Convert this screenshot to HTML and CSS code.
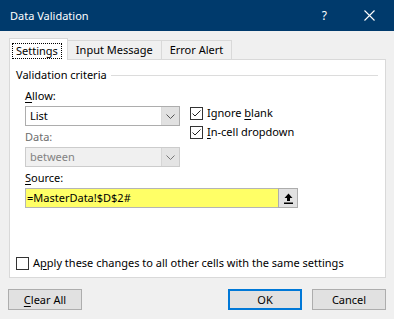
FILE: index.html
```html
<!DOCTYPE html>
<html>
<head>
<meta charset="utf-8">
<link rel="stylesheet" href="styles.css">
</head>
<body>
<div class="dialog">
  <div class="titlebar">
    <span class="title">Data Validation</span>
    <span class="help">?</span>
    <svg class="close" width="11" height="11" viewBox="0 0 11 11"><path d="M0.5 0.5 L10.5 10.5 M10.5 0.5 L0.5 10.5" stroke="#fff" stroke-width="1.1" fill="none"/></svg>
  </div>
  <div class="tabs">
    <div class="tab active"><span class="focus">Settings</span></div>
    <div class="tab">Input Message</div>
    <div class="tab">Error Alert</div>
  </div>
  <div class="panel">
    <div class="group-head"><span>Validation criteria</span><div class="group-line"></div></div>
    <div class="criteria">
      <div class="left-col">
        <div class="label"><u>A</u>llow:</div>
        <div class="select">
          <span class="select-text">List</span>
          <span class="drop"><svg width="9" height="5" viewBox="0 0 9 5"><path d="M0.5 0.5 L4.5 4.5 L8.5 0.5" stroke="#555" fill="none"/></svg></span>
        </div>
        <div class="label disabled-label">Data:</div>
        <div class="select disabled">
          <span class="select-text">between</span>
          <span class="drop"><svg width="9" height="5" viewBox="0 0 9 5"><path d="M0.5 0.5 L4.5 4.5 L8.5 0.5" stroke="#777" fill="none"/></svg></span>
        </div>
      </div>
      <div class="right-col">
        <div class="check-row">
          <span class="box"><svg width="11" height="11" viewBox="0 0 11 11"><path d="M1.5 5.5 L4 8 L9.5 2.5" stroke="#222" stroke-width="1" fill="none"/></svg></span>
          <span>Ignore <u>b</u>lank</span>
        </div>
        <div class="check-row">
          <span class="box"><svg width="11" height="11" viewBox="0 0 11 11"><path d="M1.5 5.5 L4 8 L9.5 2.5" stroke="#222" stroke-width="1" fill="none"/></svg></span>
          <span><u>I</u>n-cell dropdown</span>
        </div>
      </div>
    </div>
    <div class="source-block">
      <div class="label"><u>S</u>ource:</div>
      <div class="source-row">
        <div class="source-input">=MasterData!$D$2#</div>
        <div class="range-btn"><svg width="9" height="11" viewBox="0 0 9 11"><path d="M4.5 0.5 L8.5 5 L6 5 L6 8 L3 8 L3 5 L0.5 5 Z" fill="#000"/><rect x="0" y="9.5" width="9" height="1.5" fill="#000"/></svg></div>
      </div>
    </div>
    <div class="apply-row">
      <span class="box"></span>
      <span>A<u>p</u>ply these changes to all other cells with the same settings</span>
    </div>
  </div>
  <div class="buttons">
    <div class="btn"><u>C</u>lear All</div>
    <div class="spacer"></div>
    <div class="btn default">OK</div>
    <div class="btn">Cancel</div>
  </div>
</div>
</body>
</html>
```
FILE: styles.css
```css
html, body {
  margin: 0;
  padding: 0;
}
body {
  width: 394px;
  height: 319px;
  overflow: hidden;
  background: #f0f0f0;
  font-family: "Noto Sans", "Open Sans", sans-serif;
  font-size: 11px;
  color: #000;
}
u {
  text-decoration: underline;
  text-underline-offset: 2px;
}
.dialog {
  display: flex;
  flex-direction: column;
  height: 319px;
}
.titlebar {
  height: 31px;
  background: #003a6c;
  color: #fff;
  display: flex;
  align-items: center;
  padding-left: 10px;
  flex-shrink: 0;
}
.title {
  flex: 1;
  font-size: 11px;
}
.help {
  font-size: 12px;
  margin-right: 37px;
}
.close {
  margin-right: 19px;
}
.tabs {
  display: flex;
  align-items: flex-end;
  padding-left: 9px;
  height: 28px;
  flex-shrink: 0;
}
.tab {
  height: 19px;
  line-height: 18px;
  padding: 0 8px;
  border: 1px solid #d9d9d9;
  border-bottom: none;
  background: #f0f0f0;
  margin-left: -1px;
  box-sizing: border-box;
}
.tab:first-child {
  margin-left: 0;
}
.tab.active {
  height: 22px;
  background: #fff;
  margin-bottom: -1px;
  position: relative;
  z-index: 1;
  padding: 4px 5px 0 2px;
  line-height: 14px;
}
.focus {
  display: inline-block;
  border: 1px dotted #000;
  padding: 0 3px;
  height: 14px;
  line-height: 13px;
}
.panel {
  margin: 0 8px 0 9px;
  height: 219px;
  box-sizing: border-box;
  border: 1px solid #d9d9d9;
  background: #fff;
  display: flex;
  flex-direction: column;
}
.group-head {
  display: flex;
  align-items: center;
  margin: 7px 7px 0 6px;
  height: 16px;
  line-height: 16px;
}
.group-line {
  flex: 1;
  height: 1px;
  background: #dcdcdc;
  margin-left: 4px;
}
.criteria {
  display: flex;
  margin: 5px 0 0 15px;
}
.left-col {
  width: 155px;
  display: flex;
  flex-direction: column;
}
.label {
  height: 16px;
  line-height: 16px;
  margin-bottom: 2px;
}
.disabled-label {
  color: #6d6d6d;
  margin-top: 3px;
}
.select {
  height: 20px;
  box-sizing: border-box;
  border: 1px solid #adadad;
  background: #fff;
  display: flex;
  align-items: stretch;
}
.select-text {
  flex: 1;
  padding-left: 4px;
  line-height: 18px;
}
.drop {
  width: 17px;
  background: #e1e1e1;
  border-left: 1px solid #dadada;
  display: flex;
  align-items: center;
  justify-content: center;
}
.select.disabled {
  background: #f0f0f0;
  border-color: #cccccc;
  color: #838383;
}
.select.disabled .drop {
  background: #e4e4e4;
  border-left-color: #d6d6d6;
}
.right-col {
  margin-left: 10px;
  padding-top: 17px;
  display: flex;
  flex-direction: column;
  gap: 3px;
}
.check-row, .apply-row {
  display: flex;
  align-items: center;
  height: 16px;
  line-height: 16px;
}
.box {
  width: 13px;
  height: 13px;
  box-sizing: border-box;
  border: 1px solid #333;
  background: #fff;
  margin-right: 4px;
  display: flex;
  align-items: center;
  justify-content: center;
}
.source-block {
  margin: 3px 0 0 15px;
}
.source-row {
  display: flex;
  height: 20px;
}
.source-input {
  width: 253px;
  box-sizing: border-box;
  background: #ffff66;
  border: 1px solid #b5b5b5;
  border-right: none;
  line-height: 18px;
  padding-left: 1px;
}
.range-btn {
  width: 20px;
  box-sizing: border-box;
  background: #e1e1e1;
  border: 1px solid #adadad;
  display: flex;
  align-items: center;
  justify-content: center;
}
.apply-row {
  margin: auto 0 6px 6px;
}
.buttons {
  display: flex;
  padding: 0 8px;
  margin-top: 11px;
  gap: 10px;
}
.spacer {
  flex: 1;
}
.btn {
  width: 74px;
  height: 21px;
  box-sizing: border-box;
  border: 1px solid #adadad;
  background: #e1e1e1;
  text-align: center;
  line-height: 19px;
}
.btn.default {
  border: 2px solid #0078d7;
  line-height: 17px;
}
```
